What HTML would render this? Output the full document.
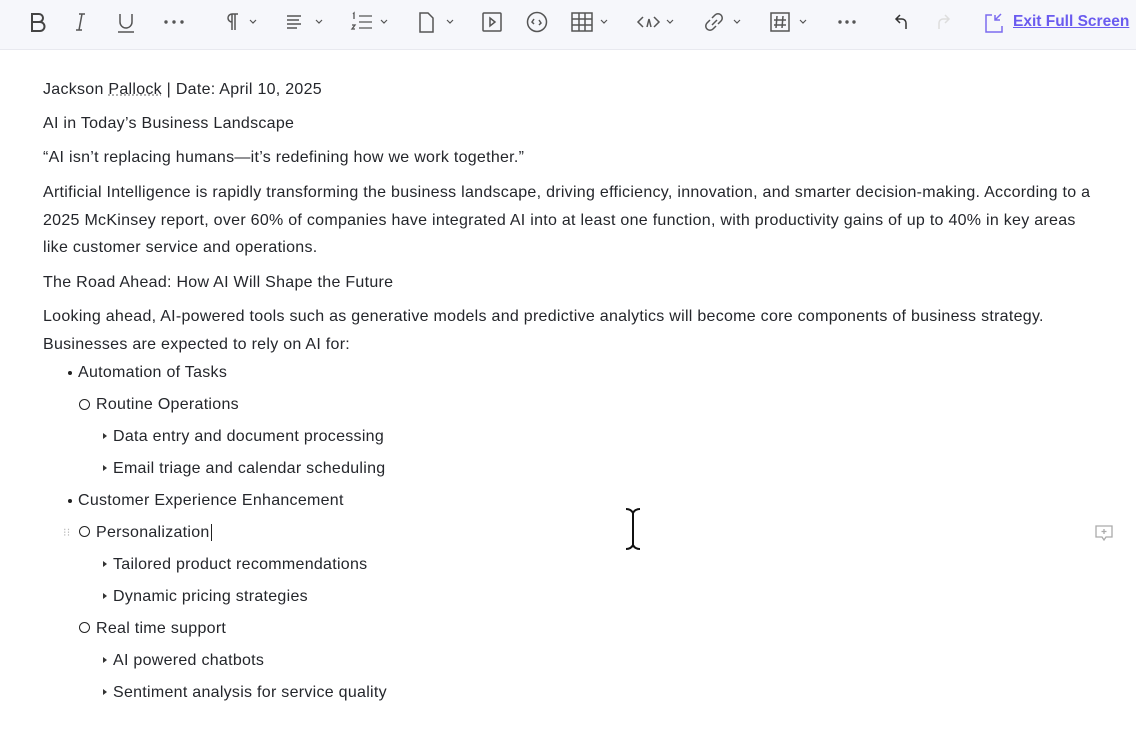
<!DOCTYPE html>
<html><head><meta charset="utf-8"><style>
body{margin:0;width:1136px;height:740px;background:#fff;font-family:"Liberation Sans",sans-serif;color:#24262b;position:relative;overflow:hidden}
.tb{position:absolute;left:0;top:0;width:1136px;height:49px;background:#f6f7fb;border-bottom:1px solid #e8e9ef}
.l{position:absolute;font-size:16px;white-space:nowrap;line-height:20px;letter-spacing:0.28px}
.dot{position:absolute;width:4px;height:4px;border-radius:50%;background:#222}
.cir{position:absolute;width:9px;height:9px;border:1.5px solid #222;border-radius:50%}
.tri{position:absolute;width:0;height:0;border-left:4px solid #333;border-top:3px solid transparent;border-bottom:3px solid transparent}
</style></head><body>
<div class="tb">
<svg width="1136" height="49" style="position:absolute;left:0;top:0" fill="none" stroke="#555" stroke-width="1.5">
<path d="M32 14h7a4 4 0 0 1 0 8h-7zM32 22h8a4.5 4.5 0 0 1 0 9h-8zM32 14v17" stroke="#444" stroke-width="2"/>
<path d="M82 14l-3 16M79 14h6M76 30h6" stroke="#555"/>
<path d="M120 14v8a6 6 0 0 0 12 0v-8M118 32h16"/>
<g fill="#555" stroke="none"><circle cx="166" cy="22" r="1.7"/><circle cx="174" cy="22" r="1.7"/><circle cx="182" cy="22" r="1.7"/><circle cx="840" cy="22" r="1.7"/><circle cx="847" cy="22" r="1.7"/><circle cx="854" cy="22" r="1.7"/></g>
<path d="M232 14h6M232 14v16M235 14v16M232 14a4 4 0 0 0 0 8"/>
<path d="M250 20l3 3 3-3M316 20l3 3 3-3M381 20l3 3 3-3M447 20l3 3 3-3M601 20l3 3 3-3M667 20l3 3 3-3M734 20l3 3 3-3M800 20l3 3 3-3" stroke-width="1.2"/>
<path d="M287 16h14M287 20h12M287 24h14M287 28h10"/>
<path d="M359 16h13M359 22h13M359 28h13M353 14l1-1v6M352 25h3l-3 4h3" stroke-width="1.3"/>
<path d="M420 13h8l5 5v14h-13z"/>
<rect x="483" y="13" width="18" height="18" rx="1"/><path d="M490 18l5 4-5 4z"/>
<circle cx="537" cy="22" r="9.5"/><path d="M534 19l-2 3 2 2M539 20l2 3-2 2"/>
<rect x="572" y="13" width="20" height="18"/><path d="M572 19h20M572 25h20M579 13v18M585 13v18"/>
<path d="M643 17l-5 5 5 5M654 17l5 5-5 5M647 27l2-8 2 8"/>
<path d="M712 18l3-3a4 4 0 0 1 6 6l-3 3M716 26l-3 3a4 4 0 0 1-6-6l3-3M712 25l5-5"/>
<rect x="771" y="13" width="18" height="18"/><path d="M777 16l-1 12M783 16l-1 12M774 20h12M774 25h12"/>
<path d="M900 15l-4 4 4 4M896 19h6a4 4 0 0 1 4 4v6" stroke="#333"/>
<path d="M945 15l4 4-4 4M949 19h-6a4 4 0 0 0-4 4v6" stroke="#ddd"/>
<path d="M992 15h-6v17h16v-6M1001 14l-6 6M995 15v5h5" stroke="#7b6cf0"/>
</svg>
<a style="position:absolute;left:1013px;top:13px;font-size:15.5px;font-weight:bold;color:#6a5bef;text-decoration:underline">Exit Full Screen</a>
</div>
<div class="l" style="left:43px;top:80px">Jackson <span style="text-decoration:underline dotted #999">Pallock</span> | Date: April 10, 2025</div>
<div class="l" style="left:43px;top:114px">AI in Today’s Business Landscape</div>
<div class="l" style="left:43px;top:148px">“AI isn’t replacing humans—it’s redefining how we work together.”</div>
<div class="l" style="left:43px;top:183px">Artificial Intelligence is rapidly transforming the business landscape, driving efficiency, innovation, and smarter decision-making. According to a</div>
<div class="l" style="left:43px;top:211px">2025 McKinsey report, over 60% of companies have integrated AI into at least one function, with productivity gains of up to 40% in key areas</div>
<div class="l" style="left:43px;top:238px">like customer service and operations.</div>
<div class="l" style="left:43px;top:273px">The Road Ahead: How AI Will Shape the Future</div>
<div class="l" style="left:43px;top:307px">Looking ahead, AI-powered tools such as generative models and predictive analytics will become core components of business strategy.</div>
<div class="l" style="left:43px;top:335px">Businesses are expected to rely on AI for:</div>

<div class="dot" style="left:68px;top:371px"></div><div class="l" style="left:78px;top:363px">Automation of Tasks</div>
<div class="cir" style="left:79px;top:399px"></div><div class="l" style="left:96px;top:395px">Routine Operations</div>
<div class="tri" style="left:103px;top:433px"></div><div class="l" style="left:113px;top:427px">Data entry and document processing</div>
<div class="tri" style="left:103px;top:465px"></div><div class="l" style="left:113px;top:459px">Email triage and calendar scheduling</div>
<div class="dot" style="left:68px;top:499px"></div><div class="l" style="left:78px;top:491px">Customer Experience Enhancement</div>
<div class="l" style="left:63px;top:523px;color:#bbb;font-size:11px">⁝⁝</div>
<div class="cir" style="left:79px;top:526px"></div><div class="l" style="left:96px;top:523px">Personalization<span style="border-left:1px solid #222;margin-left:1px"></span></div>
<div class="tri" style="left:103px;top:561px"></div><div class="l" style="left:113px;top:555px">Tailored product recommendations</div>
<div class="tri" style="left:103px;top:593px"></div><div class="l" style="left:113px;top:587px">Dynamic pricing strategies</div>
<div class="cir" style="left:79px;top:622px"></div><div class="l" style="left:96px;top:619px">Real time support</div>
<div class="tri" style="left:103px;top:657px"></div><div class="l" style="left:113px;top:651px">AI powered chatbots</div>
<div class="tri" style="left:103px;top:689px"></div><div class="l" style="left:113px;top:683px">Sentiment analysis for service quality</div>

<svg width="30" height="50" style="position:absolute;left:618px;top:506px" fill="none" stroke="#111" stroke-width="2"><path d="M8 3c4 0 6 2 7 4 1-2 3-4 7-4M15 7v32M8 43c4 0 6-2 7-4 1 2 3 4 7 4"/></svg>
<svg width="22" height="20" style="position:absolute;left:1094px;top:524px" fill="none" stroke="#aaa" stroke-width="1.3"><path d="M2 2h16v11h-6l-2 3-2-3H2zM10 5v5M7.5 7.5h5"/></svg>
</body></html>
